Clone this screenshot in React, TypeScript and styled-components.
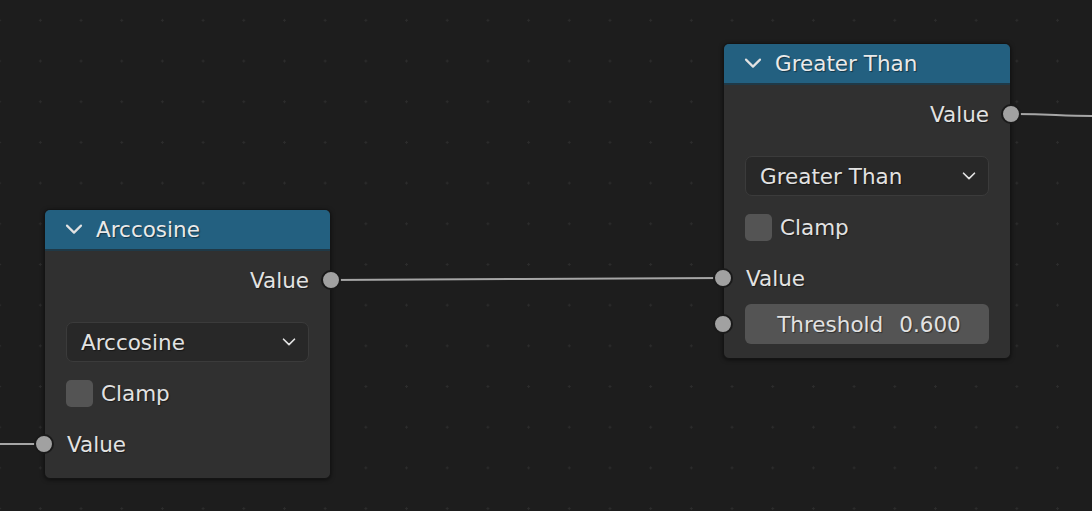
import React from 'react'
import styled, { createGlobalStyle } from 'styled-components'

const GlobalStyle = createGlobalStyle`
  html, body {
    margin: 0;
    padding: 0;
    background: #1d1d1d;
  }
  body {
    font-family: 'DejaVu Sans', 'Liberation Sans', sans-serif;
  }
`

const Canvas = styled.div`
  position: relative;
  width: 1092px;
  height: 511px;
  overflow: hidden;
  background-color: #1d1d1d;
  background-image: radial-gradient(circle, #2c2c2c 1.1px, transparent 1.4px);
  background-size: 40.7px 40.7px;
  background-position: 20px 0px;
`

const Links = styled.svg`
  position: absolute;
  inset: 0;
  width: 100%;
  height: 100%;
  pointer-events: none;
`

const Node = styled.div<{ $x: number; $y: number; $w: number }>`
  position: absolute;
  left: ${p => p.$x}px;
  top: ${p => p.$y}px;
  width: ${p => p.$w}px;
  display: flex;
  flex-direction: column;
  background: #303030;
  border: 1px solid #141414;
  border-radius: 6px;
  box-shadow: 0 1px 4px rgba(0, 0, 0, 0.55);
  box-sizing: border-box;
  color: #e2e2e2;
  font-size: 21.5px;
  text-shadow: 1px 1px 1px rgba(0, 0, 0, 0.45);
`

const Header = styled.div`
  height: 41px;
  display: flex;
  align-items: center;
  gap: 13px;
  padding: 0 20px;
  background: #236080;
  border-bottom: 2px solid #1f3947;
  border-radius: 5px 5px 0 0;
  box-sizing: border-box;
  color: #eaeaea;
`

const Body = styled.div`
  display: flex;
  flex-direction: column;
  padding: 9px 21px 14px;
`

const Row = styled.div<{ $side?: 'in' | 'out'; $gap?: number }>`
  position: relative;
  height: 40px;
  margin-top: ${p => p.$gap ?? 0}px;
  display: flex;
  align-items: center;
  justify-content: ${p => (p.$side === 'out' ? 'flex-end' : 'flex-start')};
  padding-left: ${p => (p.$side === 'in' ? 1 : 0)}px;
`

const Socket = styled.span<{ $side: 'in' | 'out' }>`
  position: absolute;
  top: 50%;
  ${p => (p.$side === 'out' ? 'right: -32px;' : 'left: -32px;')}
  width: 16px;
  height: 16px;
  margin-top: -10px;
  border-radius: 50%;
  background: #a1a1a1;
  border: 2px solid #1a1a1a;
`

const Dropdown = styled.div<{ $gap?: number }>`
  height: 40px;
  margin-top: ${p => p.$gap ?? 0}px;
  display: flex;
  align-items: center;
  justify-content: space-between;
  padding: 0 12px 0 14px;
  background: #282828;
  border: 1px solid #3b3b3b;
  border-radius: 7px;
  box-sizing: border-box;
`

const Check = styled.span`
  width: 27px;
  height: 27px;
  margin-right: 8px;
  border-radius: 5px;
  background: #545454;
`

const Field = styled.div<{ $gap?: number }>`
  position: relative;
  height: 40px;
  margin-top: ${p => p.$gap ?? 0}px;
  display: flex;
  align-items: center;
  justify-content: center;
  gap: 16px;
  padding-left: 4px;
  background: #545454;
  border-radius: 6px;
`

const Chevron = ({ size = 16 }: { size?: number }) => (
  <svg width={size} height={size * 0.6} viewBox="0 0 16 10" fill="none">
    <path d="M1.5 1.5 L8 8 L14.5 1.5" stroke="#e2e2e2" strokeWidth="2" strokeLinecap="round" strokeLinejoin="round" />
  </svg>
)

export default function App() {
  return (
    <>
      <GlobalStyle />
      <Canvas>
        <Links viewBox="0 0 1092 511">
          <g stroke="#a6a6a6" strokeWidth="2" fill="none">
            <path d="M0 444 L44 444" />
            <path d="M330 280 C 520 280, 530 278, 723 278" />
            <path d="M1011 114 C 1050 114, 1060 116, 1092 116" />
          </g>
        </Links>

        <Node $x={44} $y={209} $w={287}>
          <Header>
            <Chevron size={18} />
            <span>Arccosine</span>
          </Header>
          <Body>
            <Row $side="out">
              Value
              <Socket $side="out" />
            </Row>
            <Dropdown $gap={22}>
              <span>Arccosine</span>
              <Chevron size={14} />
            </Dropdown>
            <Row $gap={11}>
              <Check />
              Clamp
            </Row>
            <Row $side="in" $gap={11}>
              Value
              <Socket $side="in" />
            </Row>
          </Body>
        </Node>

        <Node $x={723} $y={43} $w={288}>
          <Header>
            <Chevron size={18} />
            <span>Greater Than</span>
          </Header>
          <Body>
            <Row $side="out">
              Value
              <Socket $side="out" />
            </Row>
            <Dropdown $gap={22}>
              <span>Greater Than</span>
              <Chevron size={14} />
            </Dropdown>
            <Row $gap={11}>
              <Check />
              Clamp
            </Row>
            <Row $side="in" $gap={11}>
              Value
              <Socket $side="in" />
            </Row>
            <Field $gap={6}>
              <span>Threshold</span>
              <span>0.600</span>
              <Socket $side="in" />
            </Field>
          </Body>
        </Node>
      </Canvas>
    </>
  )
}
